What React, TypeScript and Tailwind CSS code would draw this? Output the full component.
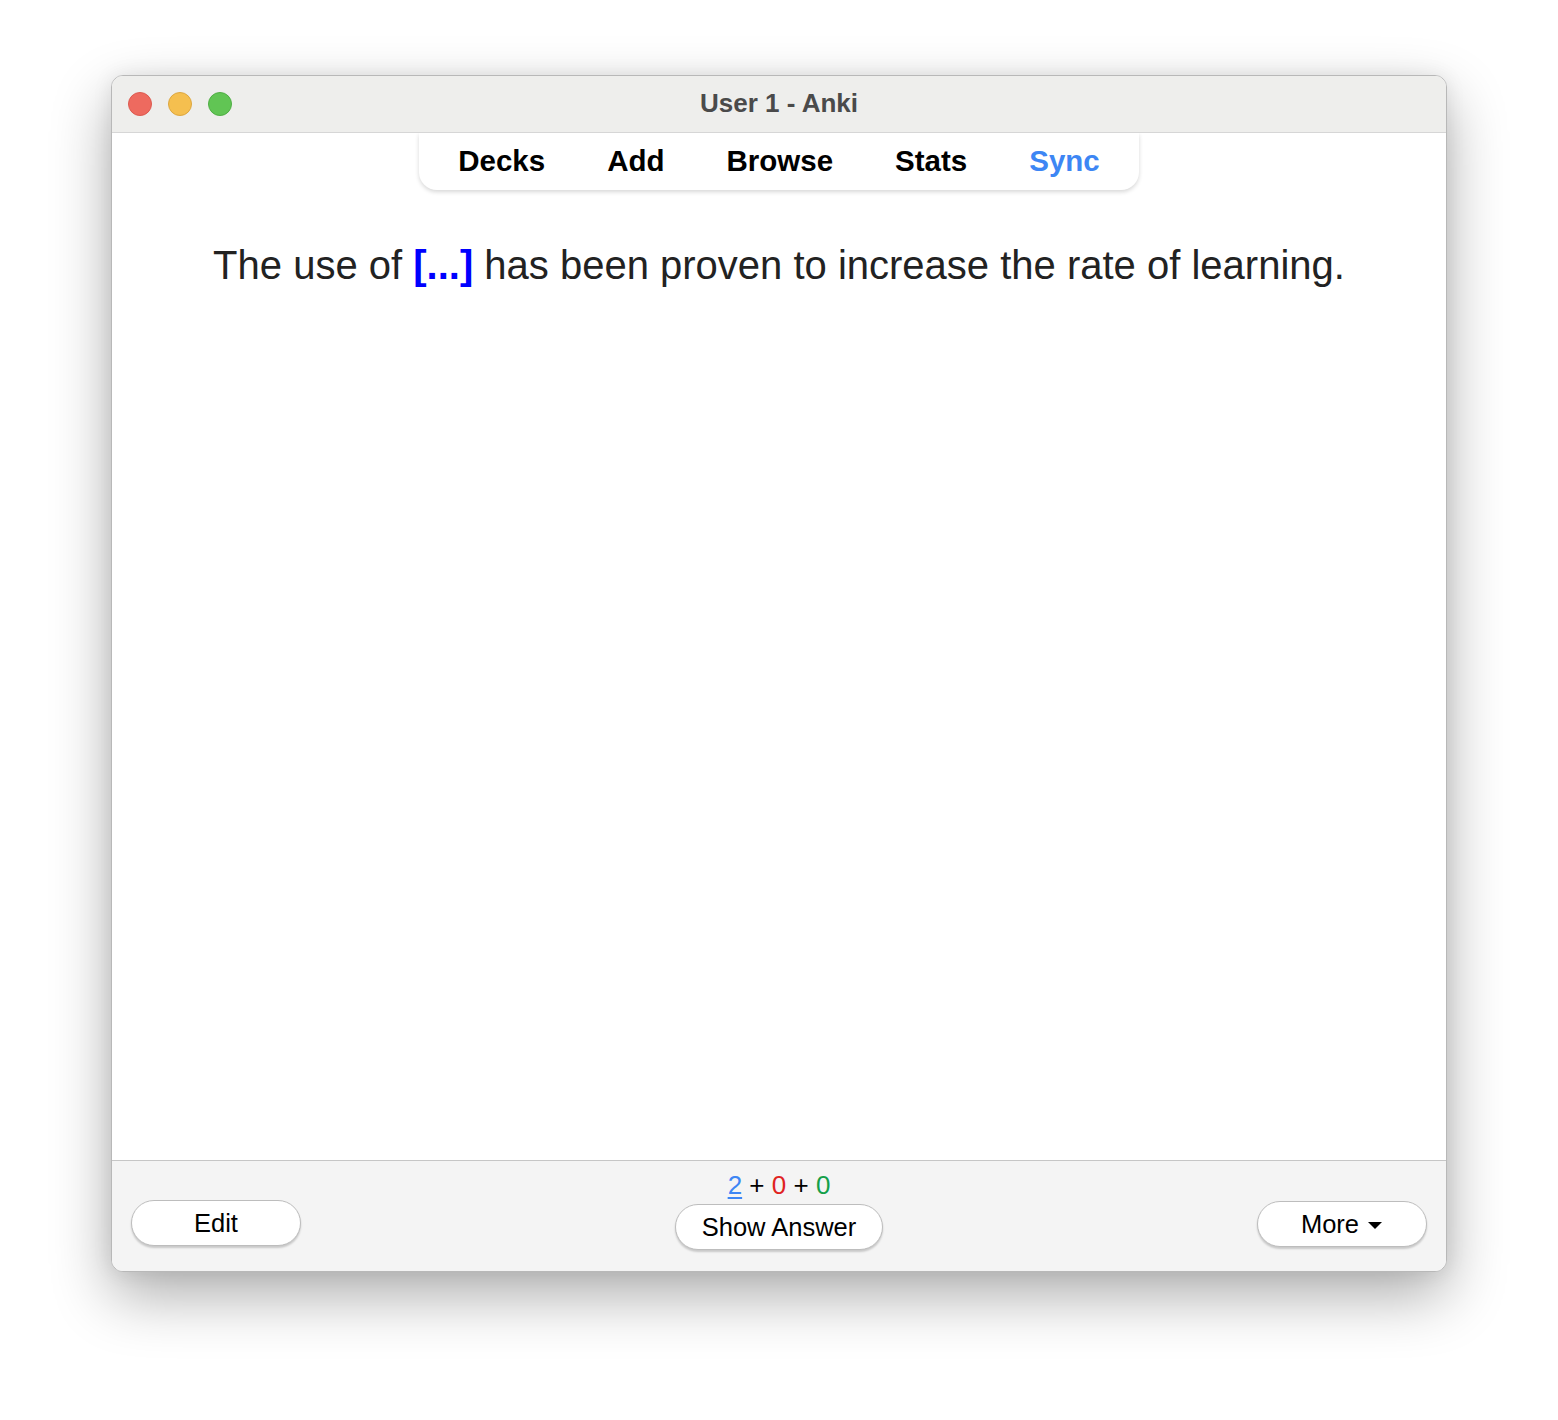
const NAV_ITEMS = [
  { label: "Decks", active: false },
  { label: "Add", active: false },
  { label: "Browse", active: false },
  { label: "Stats", active: false },
  { label: "Sync", active: true },
];

function PillButton({ children, className = "" }: { children: React.ReactNode; className?: string }) {
  return (
    <button
      className={`flex items-center justify-center rounded-full border border-[#bdbdbd] bg-white text-[25.5px] text-black shadow-[0_2px_2px_rgba(0,0,0,0.18)] ${className}`}
    >
      {children}
    </button>
  );
}

export default function App() {
  return (
    <div className="min-h-[1420px] w-full bg-white pt-[75px] font-['Liberation_Sans',Arial,sans-serif]">
      <div className="mx-auto flex h-[1197px] w-[1336px] flex-col overflow-hidden rounded-[12px] border border-[#b8b8b8] bg-white shadow-[0_24px_60px_rgba(0,0,0,0.32),0_0_20px_rgba(0,0,0,0.08)]">
        {/* title bar */}
        <div className="relative flex h-[57px] shrink-0 items-center border-b border-[#d6d6d6] bg-[#eeeeec]">
          <div className="flex items-center gap-[16px] pl-[16px]">
            <span className="h-[24px] w-[24px] rounded-full border border-[#dd5a50] bg-[#ee6a5f]" />
            <span className="h-[24px] w-[24px] rounded-full border border-[#dda740] bg-[#f5bf4f]" />
            <span className="h-[24px] w-[24px] rounded-full border border-[#4fae44] bg-[#61c554]" />
          </div>
          <div className="absolute inset-0 flex items-center justify-center pb-[2px] text-[26px] font-bold text-[#4a4a4a]">
            User 1 - Anki
          </div>
        </div>

        {/* content */}
        <div className="flex flex-1 flex-col items-center">
          <nav className="flex h-[57px] items-center rounded-b-[18px] bg-white px-[8px] shadow-[0_2px_4px_rgba(0,0,0,0.16)]">
            {NAV_ITEMS.map(({ label, active }) => (
              <span
                key={label}
                className={`px-[31px] text-[29.5px] font-bold ${active ? "text-[#3d86f4]" : "text-black"}`}
              >
                {label}
              </span>
            ))}
          </nav>
          <p className="mt-[45px] text-center text-[40px] text-[#222]">
            The use of <span className="font-bold text-[#0000ff]">[...]</span> has been proven to increase the rate of
            learning.
          </p>
        </div>

        {/* bottom bar */}
        <div className="flex h-[111px] shrink-0 items-start justify-between border-t border-[#c6c6c6] bg-[#f4f4f4] px-[19px]">
          <PillButton className="mt-[39px] h-[46px] w-[170px]">Edit</PillButton>
          <div className="flex flex-col items-center pt-[9px]">
            <div className="text-[26px] leading-[30px] text-black">
              <span className="text-[#3d86f4] underline decoration-[2px] underline-offset-[3px]">2</span>
              {" + "}
              <span className="text-[#e0231f]">0</span>
              {" + "}
              <span className="text-[#14a04a]">0</span>
            </div>
            <PillButton className="mt-[4px] h-[46px] w-[208px]">Show Answer</PillButton>
          </div>
          <PillButton className="mt-[40px] h-[46px] w-[170px] gap-[8px]">
            <span>More</span>
            <svg width="16" height="10" viewBox="0 0 16 10" className="mt-[3px]">
              <path d="M1 1 L15 1 L8 8 Z" fill="black" />
            </svg>
          </PillButton>
        </div>
      </div>
    </div>
  );
}
